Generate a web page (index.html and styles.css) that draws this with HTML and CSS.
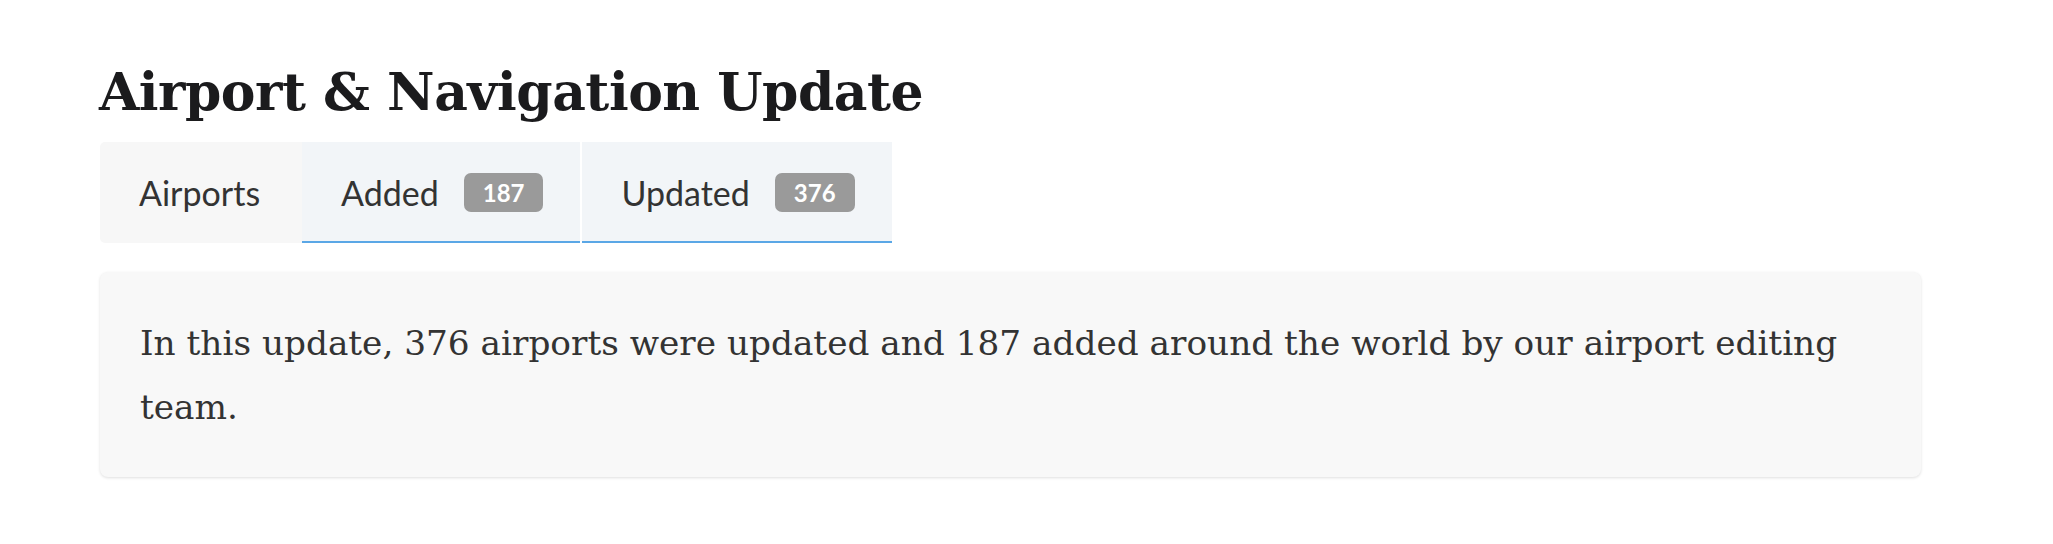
FILE: index.html
```html
<!DOCTYPE html>
<html lang="en">
<head>
<meta charset="utf-8">
<title>Airport &amp; Navigation Update</title>
<link rel="stylesheet" href="styles.css">
</head>
<body>
<main class="page">
  <h1 class="title">Airport &amp; Navigation Update</h1>
  <nav class="tabs">
    <div class="tab tab-plain">Airports</div>
    <div class="tab tab-active">Added <span class="badge">187</span></div>
    <div class="tab tab-active">Updated <span class="badge">376</span></div>
  </nav>
  <section class="card">
    <p class="card-text">In this update, 376 airports were updated and 187 added around the world by our airport editing team.</p>
  </section>
</main>
</body>
</html>
```

FILE: styles.css
```css
* { box-sizing: border-box; }
html, body { margin: 0; padding: 0; background: #ffffff; }
.page {
  display: flex;
  flex-direction: column;
  align-items: flex-start;
  padding: 57px 132px 40px 100px;
}
.title {
  margin: 0;
  font-family: "DejaVu Serif", Georgia, serif;
  font-weight: 700;
  font-size: 52px;
  line-height: 70px;
  color: #1b1b1d;
  letter-spacing: -0.5px;
  margin-left: -1px;
}
.tabs {
  display: flex;
  margin-top: 15px;
  height: 101px;
  font-family: Lato, "Open Sans", sans-serif;
  font-size: 34px;
  color: #333333;
}
.tab {
  display: flex;
  align-items: center;
  padding: 0 37px 0 39px;
}
.tab-plain {
  background: #f7f7f7;
  border-top-left-radius: 5px;
  border-bottom-left-radius: 5px;
  width: 202px;
}
.tab-active {
  background: #f2f5f8;
  border-bottom: 2px solid #5aa7e6;
  padding-top: 2px;
}
.tab-active + .tab-active { margin-left: 2px; }
.badge {
  display: inline-flex;
  align-items: center;
  justify-content: center;
  margin-left: 25px;
  height: 39px;
  padding: 0 19px;
  background: #9a9a9a;
  color: #ffffff;
  border-radius: 7px;
  font-weight: 700;
  font-size: 24px;
}
.card {
  align-self: stretch;
  margin-top: 29px;
  background: #f8f8f8;
  border-radius: 8px;
  box-shadow: 0 1px 3px rgba(0, 0, 0, 0.13);
  padding: 40px 40px 38px 40px;
}
.card-text {
  margin: 0;
  font-family: "DejaVu Serif", Georgia, serif;
  font-size: 34.3px;
  line-height: 63.5px;
  color: #333333;
}
```
